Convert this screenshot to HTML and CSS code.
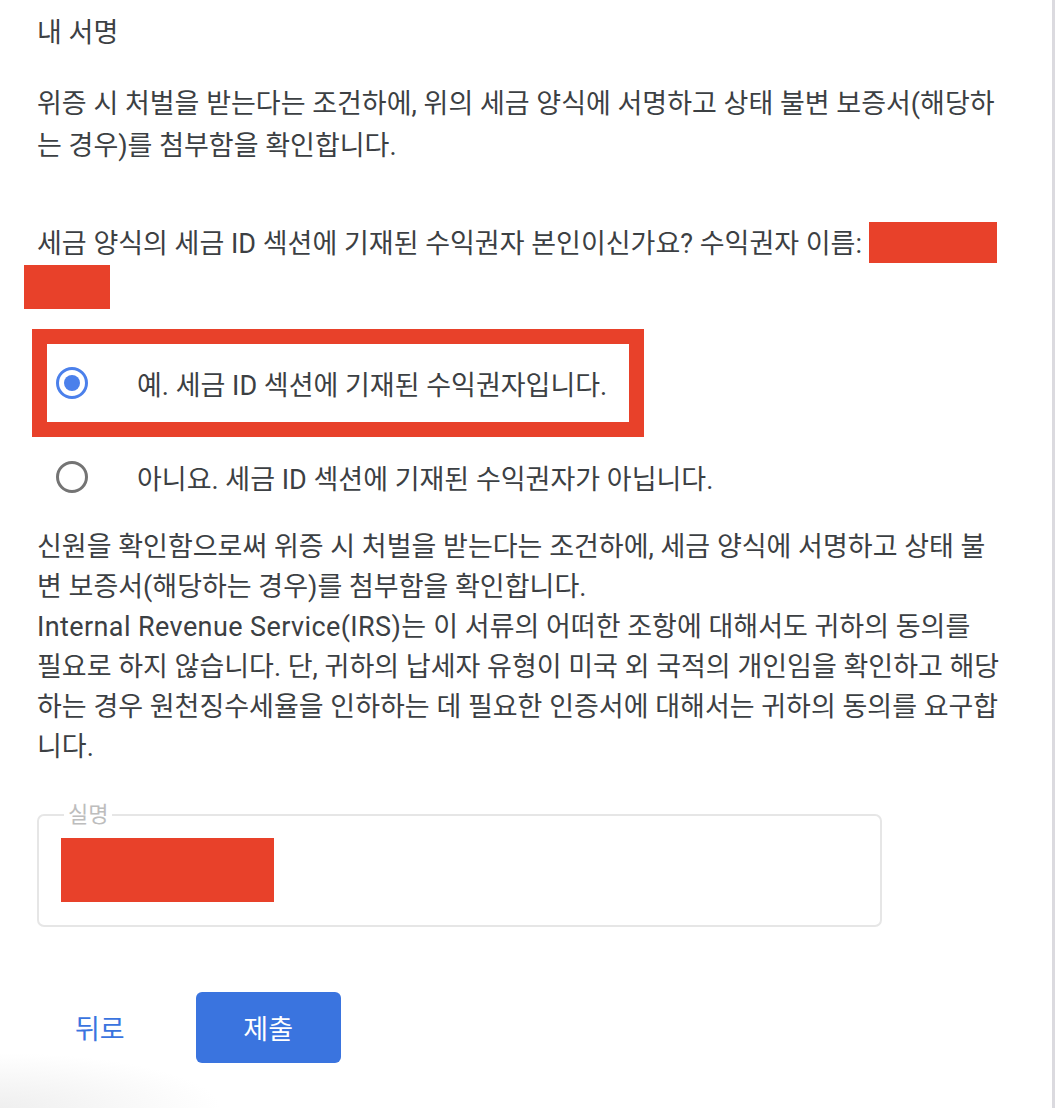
FILE: index.html
```html
<!DOCTYPE html>
<html lang="ko">
<head>
<meta charset="utf-8">
<title>내 서명</title>
<link rel="stylesheet" href="styles.css">
</head>
<body>
<div class="page">
  <h2 class="title">내 서명</h2>
  <p class="para">위증 시 처벌을 받는다는 조건하에, 위의 세금 양식에 서명하고 상태 불변 보증서(해당하는 경우)를 첨부함을 확인합니다.</p>
  <p class="para q">세금 양식의 세금 ID 섹션에 기재된 수익권자 본인이신가요? 수익권자 이름: <span class="redact r1"></span><br><span class="redact r2"></span></p>

  <div class="options">
    <label class="option highlight">
      <span class="radio checked"></span>
      <span class="opt-text">예. 세금 ID 섹션에 기재된 수익권자입니다.</span>
    </label>
    <label class="option plain">
      <span class="radio"></span>
      <span class="opt-text">아니요. 세금 ID 섹션에 기재된 수익권자가 아닙니다.</span>
    </label>
  </div>

  <p class="para small-lh">신원을 확인함으로써 위증 시 처벌을 받는다는 조건하에, 세금 양식에 서명하고 상태 불변 보증서(해당하는 경우)를 첨부함을 확인합니다.<br><span class="latin">Internal Revenue Service(IRS)는</span> 이 서류의 어떠한 조항에 대해서도 귀하의 동의를 필요로 하지 않습니다. 단, 귀하의 납세자 유형이 미국 외 국적의 개인임을 확인하고 해당하는 경우 원천징수세율을 인하하는 데 필요한 인증서에 대해서는 귀하의 동의를 요구합니다.</p>

  <fieldset class="field">
    <legend class="field-label">실명</legend>
    <span class="redact r3"></span>
  </fieldset>

  <div class="actions">
    <button class="btn-text" type="button">뒤로</button>
    <button class="btn-primary" type="button">제출</button>
  </div>
</div>
</body>
</html>
```
FILE: styles.css
```css
html, body {
  margin: 0;
  padding: 0;
  background: #ffffff;
}
body {
  font-family: Roboto, "Noto Sans CJK KR", sans-serif;
  color: #3c4043;
}
.page {
  width: 1055px;
  min-height: 1108px;
  box-sizing: border-box;
  border-right: 3px solid #dbdadf;
  padding: 12px 0 0 37px;
  background: radial-gradient(ellipse 220px 55px at 0 100%, #efefef, rgba(255,255,255,0));
}
.title {
  margin: 0;
  font-size: 27px;
  font-weight: 400;
  line-height: 42px;
}
.para {
  margin: 29px 0 0;
  width: 964px;
  font-size: 27px;
  line-height: 42px;
}
.para.q {
  margin-top: 56px;
}
.latin {
  letter-spacing: 0.4px;
}
.redact {
  display: inline-block;
  background: #e8412a;
  vertical-align: top;
}
.r1 {
  width: 128px;
  height: 41px;
  margin-top: -1px;
}
.r2 {
  width: 86px;
  height: 44px;
  margin-left: -13px;
}
.options {
  margin-top: 20px;
  display: flex;
  flex-direction: column;
}
.option {
  display: flex;
  align-items: center;
  font-size: 27px;
}
.highlight {
  margin-left: -5px;
  width: 612px;
  height: 108px;
  box-sizing: border-box;
  border: 15px solid #e8412a;
  padding-left: 9px;
}
.plain {
  margin-top: 10px;
  height: 60px;
  padding-left: 19px;
}
.radio {
  width: 32px;
  height: 32px;
  box-sizing: border-box;
  border-radius: 50%;
  border: 3px solid #747474;
  flex: none;
  position: relative;
}
.radio.checked {
  border-color: #4b80eb;
}
.radio.checked::after {
  content: "";
  position: absolute;
  left: 5px;
  top: 5px;
  width: 16px;
  height: 16px;
  border-radius: 50%;
  background: #4b80eb;
}
.opt-text {
  margin-left: 49px;
}
.para.small-lh {
  margin-top: 20px;
  line-height: 40px;
}
.field {
  margin: 37px 0 0;
  width: 845px;
  height: 123px;
  box-sizing: border-box;
  border: 2px solid #e6e6e6;
  border-radius: 7px;
  padding: 12px 0 0 22px;
}
.field-label {
  margin-left: 3px;
  padding: 0 4px;
  font-size: 22px;
  line-height: 22px;
  color: #bdbdbd;
}
.r3 {
  width: 213px;
  height: 64px;
}
.actions {
  margin-top: 65px;
  display: flex;
  align-items: center;
}
.btn-text {
  font-family: inherit;
  background: none;
  border: none;
  padding: 0;
  margin-left: 38px;
  font-size: 27px;
  color: #3a74df;
  white-space: nowrap;
  cursor: pointer;
}
.btn-primary {
  font-family: inherit;
  margin-left: 71px;
  width: 145px;
  height: 71px;
  border: none;
  border-radius: 6px;
  background: #3a74df;
  color: #ffffff;
  font-size: 27px;
  cursor: pointer;
}
```
